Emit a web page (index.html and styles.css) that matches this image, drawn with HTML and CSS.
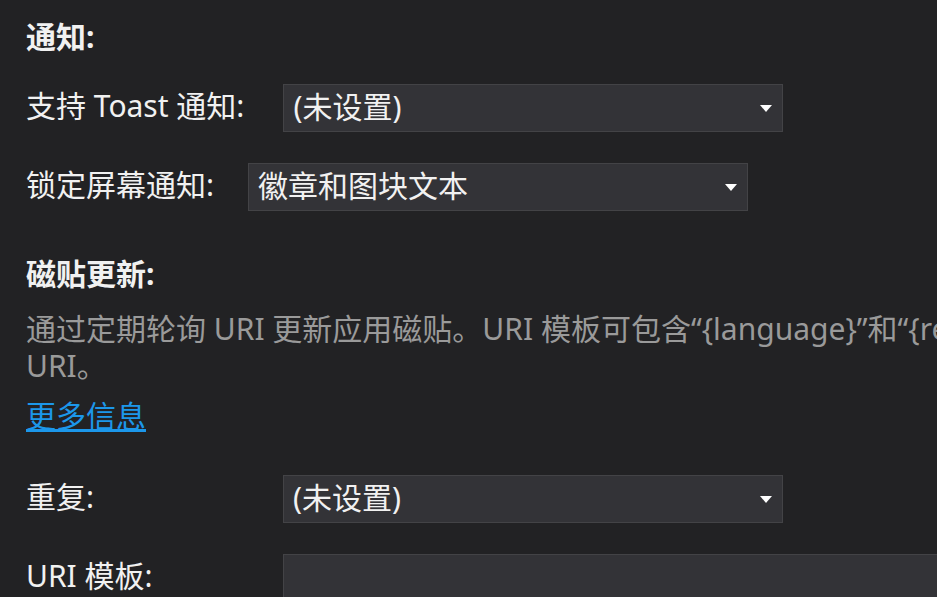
FILE: index.html
```html
<!DOCTYPE html>
<html lang="zh-CN">
<head>
  <meta charset="UTF-8" />
  <title>通知与磁贴</title>
  <link rel="stylesheet" href="styles.css">
</head>
<body>
  <div class="panel">
    <div class="section-title">通知:</div>

    <div class="field-row first">
      <label class="field-label toast">支持 Toast 通知:</label>
      <div class="combo">
        <span class="combo-value">(未设置)</span>
        <span class="combo-arrow"></span>
      </div>
    </div>

    <div class="field-row">
      <label class="field-label">锁定屏幕通知:</label>
      <div class="combo">
        <span class="combo-value">徽章和图块文本</span>
        <span class="combo-arrow"></span>
      </div>
    </div>

    <div class="section-title tile">磁贴更新:</div>
    <p class="description"><span class="nowrap">通过定期轮询 URI 更新应用磁贴。URI 模板可包含“{language}”和“{region}”令牌，这些令牌将在运行时替换为相应的值，以生成要轮询的</span><br>URI。</p>
    <a class="more-link" href="#">更多信息</a>

    <div class="field-row repeat">
      <label class="field-label wide">重复:</label>
      <div class="combo">
        <span class="combo-value">(未设置)</span>
        <span class="combo-arrow"></span>
      </div>
    </div>

    <div class="field-row">
      <label class="field-label wide">URI 模板:</label>
      <div class="text-input"></div>
    </div>
  </div>
</body>
</html>
```

FILE: styles.css
```css
body {
  margin: 0;
  padding: 0;
  background: #222224;
  color: #f1f1f1;
  font-family: "Noto Sans", "Noto Sans CJK SC", sans-serif;
  font-size: 30px;
  overflow: hidden;
  height: 597px;
}

.panel {
  padding: 19px 0 0 26px;
}

/* SECTION HEADINGS */
.section-title {
  font-weight: bold;
  font-size: 30px;
  line-height: 36px;
}

.section-title.tile {
  margin-top: 45px;
}

/* FORM ROWS */
.field-row {
  display: flex;
  align-items: center;
  gap: 34px;
  margin-top: 31px;
  white-space: nowrap;
}

.field-row.first {
  margin-top: 29px;
}

.field-row.repeat {
  margin-top: 39px;
}

.field-label {
  line-height: 36px;
  padding-bottom: 4px;
}

.field-label.toast {
  padding-right: 5px;
}

.field-label.wide {
  min-width: 223px;
}

.combo {
  width: 500px;
  height: 48px;
  box-sizing: border-box;
  background: #333337;
  border: 1px solid #434346;
  display: flex;
  align-items: center;
  justify-content: space-between;
  padding: 0 10px 0 9px;
}

.combo-value {
  line-height: 36px;
  padding-bottom: 2px;
}

.combo-arrow {
  width: 0;
  height: 0;
  border-left: 6.5px solid transparent;
  border-right: 6.5px solid transparent;
  border-top: 7px solid #ffffff;
}

.text-input {
  width: 700px;
  flex-shrink: 0;
  height: 48px;
  box-sizing: border-box;
  background: #333337;
  border: 1px solid #434346;
}

/* DESCRIPTION + LINK */
.description {
  margin: 18px 0 0 0;
  color: #9a9a9a;
  line-height: 37px;
}

.nowrap {
  white-space: nowrap;
}

.more-link {
  display: inline-block;
  margin-top: 14px;
  color: #1c97ea;
  line-height: 36px;
  text-decoration: underline;
}
```
